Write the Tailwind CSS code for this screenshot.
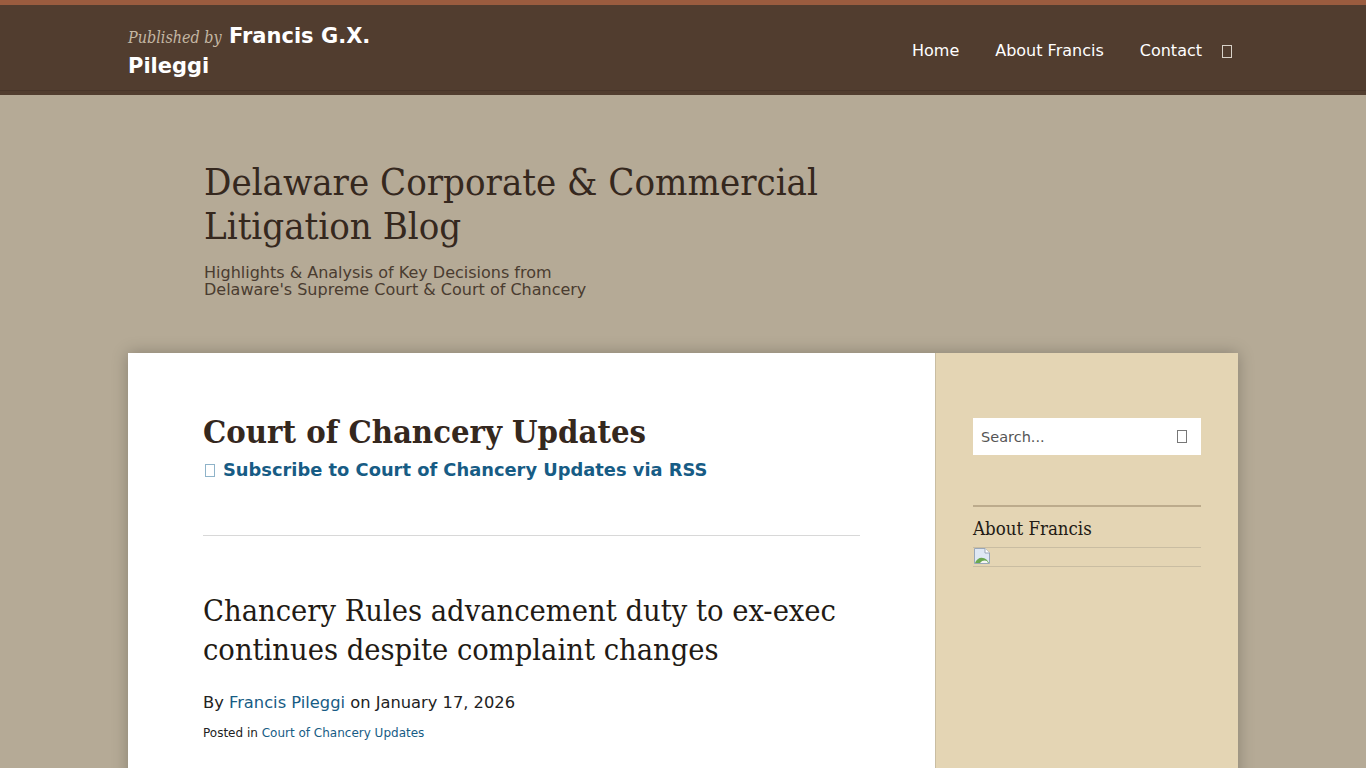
<!DOCTYPE html>
<html lang="en">
<head>
    <meta charset="UTF-8">
    <meta name="viewport" content="width=device-width, initial-scale=1.0">
    <title>Delaware Corporate & Commercial Litigation Blog</title>
    <script src="https://cdn.jsdelivr.net/npm/@tailwindcss/browser@4"></script>
</head>
<body class="h-[768px] overflow-hidden bg-[#b5aa96] font-['DejaVu_Sans',sans-serif] text-[#222]">
    <!-- Top bar -->
    <header class="h-[95px] bg-[#513d2f] border-t-[5px] border-[#9a5c3f]">
        <div class="h-[86px] border-b border-[#483529]">
            <div class="w-[1110px] mx-auto flex justify-between items-center h-[92px]">
                <div class="w-[250px] text-[21px] leading-[28px] font-bold text-white">
                    <span class="font-['DejaVu_Serif_Condensed',serif] italic font-normal text-[16px] text-[#c4b7a3]">Published by</span> Francis G.X. Pileggi
                </div>
                <nav class="flex items-center gap-9 text-[16px] text-white pr-[6px]">
                    <a href="#">Home</a>
                    <a href="#">About Francis</a>
                    <a href="#">Contact</a>
                    <span class="w-[10px] h-[13px] border border-[#d8d2c8] -ml-4"></span>
                </nav>
            </div>
        </div>
    </header>

    <!-- Blog title -->
    <div class="w-[1110px] mx-auto pl-[76px] pt-[65px] h-[258px]">
        <h1 class="font-['DejaVu_Serif_Condensed',serif] text-[38px] leading-[44px] text-[#35281e] w-[700px]">Delaware Corporate &amp; Commercial Litigation Blog</h1>
        <p class="mt-[16px] text-[16px] leading-[17px] text-[#4a3c30]">Highlights &amp; Analysis of Key Decisions from<br>Delaware's Supreme Court &amp; Court of Chancery</p>
    </div>

    <!-- Content -->
    <div class="w-[1110px] mx-auto flex h-[600px] shadow-[0_0_15px_rgba(0,0,0,0.25)]">
        <main class="w-[807px] bg-white px-[75px] pt-[60px]">
            <h1 class="font-['DejaVu_Serif_Condensed',serif] font-bold text-[32.5px] leading-[38px] text-[#35281e]">Court of Chancery Updates</h1>
            <a href="#" class="flex items-center gap-2 mt-[6px] pl-[2px] text-[17.85px] font-bold text-[#175c85]">
                <span class="w-[10px] h-[13px] border border-[#8fb3c9]"></span>
                Subscribe to Court of Chancery Updates via RSS
            </a>
            <hr class="mt-[51px] border-[#d8d8d8]">
            <h2 class="mt-[55px] font-['DejaVu_Serif_Condensed',serif] text-[30.5px] leading-[39px] text-[#221a14]">Chancery Rules advancement duty to ex-exec continues despite complaint changes</h2>
            <p class="mt-[23px] text-[16.3px] leading-[22px]">By <a href="#" class="text-[#175c85]">Francis Pileggi</a> on January 17, 2026</p>
            <p class="mt-[10px] text-[12px] leading-[18px]">Posted in <a href="#" class="text-[#175c85]">Court of Chancery Updates</a></p>
            <p class="mt-[21px] text-[16px] leading-[26px]">A Chancery ruling clarified advancement rights when a company amends claims against a former</p>
        </main>
        <aside class="w-[303px] bg-[#e4d5b4] border-l border-[#c9bda2] pl-[37px] pr-[37px] pt-[65px]">
            <div class="h-[37px] bg-white flex items-center justify-between pl-2 pr-[14px] text-[14.5px] text-[#555]">
                <span class="pt-[3px]">Search...</span>
                <span class="w-[10px] h-[13px] border border-[#777]"></span>
            </div>
            <div class="mt-[50px] border-t-2 border-[#bcab8c] pt-[10px]">
                <h3 class="font-['DejaVu_Serif_Condensed',serif] text-[18.5px] leading-[24px] text-[#221a14]">About Francis</h3>
                <div class="mt-[6px] h-[20px] border-y border-[#c9bda2] pl-px">
                    <!-- broken image placeholder -->
                    <svg width="16" height="16" viewBox="0 0 16 16" class="block">
                        <path d="M0.5 0.5H11L15.5 5V15.5H0.5Z" fill="#dfe8f4" stroke="#9aa7b8"/>
                        <path d="M11 0.5V5H15.5" fill="#fff" stroke="#9aa7b8"/>
                        <path d="M1 15C3 10 8 8 13 12L15 15Z" fill="#6aa84f"/>
                        <path d="M6 15C8 12 11 12 13 13L14 15Z" fill="#f4f4f4"/>
                    </svg>
                </div>
            </div>
        </aside>
    </div>
</body>
</html>
